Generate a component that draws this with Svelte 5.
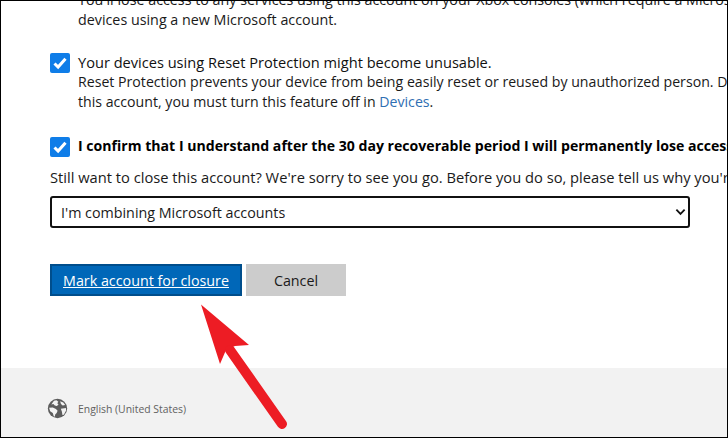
<script>
	let reset = $state(true);
	let confirm = $state(true);
	let reason = $state("combining");
</script>

<div class="frame">
	<main>
		<div class="clip">
			<p class="top">
				You'll lose access to any services using this account on your Xbox consoles (which require a Microsoft account) and any other<br />
				devices using a new Microsoft account.
			</p>
		</div>

		<label class="check first">
			<input type="checkbox" bind:checked={reset} />
			<span class="box"><svg viewBox="0 0 20 20"><path d="M4.500 10.500l3.600 3.600 7.400-8.400" /></svg></span>
			<span class="text">
				<span class="title">Your devices using Reset Protection might become unusable.</span>
				<span>Reset Protection prevents your device from being easily reset or reused by unauthorized person. Due to closing</span>
				<span>this account, you must turn this feature off in <a href="#devices">Devices</a>.</span>
			</span>
		</label>

		<label class="check second">
			<input type="checkbox" bind:checked={confirm} />
			<span class="box"><svg viewBox="0 0 20 20"><path d="M4.500 10.500l3.600 3.600 7.400-8.400" /></svg></span>
			<span class="text">
				<strong>I confirm that I understand after the 30 day recoverable period I will permanently lose access to this account.</strong>
			</span>
		</label>

		<p class="ask">Still want to close this account? We're sorry to see you go. Before you do so, please tell us why you're leaving us.</p>

		<div class="select">
			<select bind:value={reason}>
				<option value="combining">I'm combining Microsoft accounts</option>
			</select>
			<svg viewBox="0 0 12 8"><path d="M1.500 1.500L6 6l4.500-4.500" /></svg>
		</div>

		<div class="actions">
			<button class="primary" type="button">Mark account for closure</button>
			<button class="cancel" type="button">Cancel</button>
		</div>
	</main>

	<footer>
		<svg class="globe" viewBox="0 0 20 20">
			<circle cx="10" cy="10" r="9.200" fill="#5c5c5c" />
			<path fill="#f2f2f2" d="M6.600 2.500 9 2.200l1.800 1.300-1 1.600 1.200 1-1.600 1.600-2-.5-1.300-1.400-2 .3L6.600 2.500zM2 9.200l3.500-.2 3 1.400 1.600 1.800-.9 2.200-1.400 1.300-.3 2h-1l-1-3.400-2.500-1.600L2 9.200zM12.500 3l3 1.200 1.800 2.400-2.400.5-1.600-1.400-.8-2.700zM13.200 10.200l4.800-.6.200 2.400-2.200 4-1.300.2-.5-3.200-1-2.800z" />
		</svg>
		<span>English (United States)</span>
	</footer>

	<svg class="arrow" viewBox="0 0 728 438">
		<path class="head" d="M201 304.500 249 345 235 346 226 350 220 364z" />
		<path class="shaft" d="M230 350 282 424" />
	</svg>
</div>

<style>
	:global(body) {
		margin: 0;
	}
	.frame {
		position: relative;
		box-sizing: border-box;
		width: 728px;
		height: 438px;
		display: flex;
		flex-direction: column;
		overflow: hidden;
		border: 1px solid #000;
		background: #fff;
		color: #1a1a1a;
		font-family: "Open Sans", "Noto Sans", sans-serif;
		font-size: 14.3px;
		line-height: 20px;
	}
	main {
		flex: 1;
		padding-left: 49px;
	}
	.clip {
		height: 29px;
		overflow: hidden;
		position: relative;
	}
	.top {
		margin: -11px 0 0 28px;
		white-space: nowrap;
	}
	.check {
		display: flex;
		gap: 8px;
		white-space: nowrap;
	}
	.check.first {
		margin-top: 22px;
	}
	.check.second {
		margin-top: 24px;
	}
	.check input {
		position: absolute;
		opacity: 0;
		pointer-events: none;
	}
	.box {
		flex: none;
		width: 20px;
		height: 20px;
		margin-top: 1px;
		border-radius: 2px;
		background: #0f7de8;
	}
	.box svg {
		display: block;
		fill: none;
		stroke: #fff;
		stroke-width: 3;
	}
	.text {
		display: flex;
		flex-direction: column;
		font-size: 14.15px;
	}
	.title {
		font-weight: 500;
		font-size: 14.6px;
		color: #111;
	}
	strong {
		font-weight: 700;
		font-size: 14.1px;
		color: #000;
	}
	a {
		color: #2f6fb3;
		text-decoration: none;
	}
	.ask {
		margin: 10px 0 0;
		white-space: nowrap;
		font-size: 14.7px;
	}
	.select {
		position: relative;
		width: 640px;
		margin-top: 9px;
	}
	.select select {
		appearance: none;
		display: block;
		box-sizing: border-box;
		width: 100%;
		height: 32px;
		padding: 2px 9px 0;
		border: 2px solid #111;
		border-radius: 3px;
		background: #fff;
		color: #1a1a1a;
		font: inherit;
	}
	.select svg {
		position: absolute;
		right: 4px;
		top: 12px;
		width: 11px;
		height: 8px;
		fill: none;
		stroke: #111;
		stroke-width: 2;
		pointer-events: none;
	}
	.actions {
		display: flex;
		gap: 4px;
		margin-top: 36px;
	}
	button {
		height: 32px;
		font: inherit;
		padding: 2px 0 0;
		border: 0;
		cursor: pointer;
	}
	.primary {
		box-sizing: border-box;
		width: 192px;
		border: 2px solid #004e8c;
		background: #0067b8;
		color: #fff;
		text-decoration: underline;
	}
	.cancel {
		width: 100px;
		background: #cccccc;
		color: #1a1a1a;
	}
	footer {
		height: 69px;
		flex: none;
		display: flex;
		align-items: center;
		gap: 10px;
		padding: 12px 0 0 46px;
		box-sizing: border-box;
		background: #f2f2f2;
		color: #616161;
		font-size: 10.4px;
	}
	.globe {
		width: 21px;
		height: 21px;
		flex: none;
	}
	.arrow {
		position: absolute;
		left: -1px;
		top: -1px;
		width: 728px;
		height: 438px;
		pointer-events: none;
	}
	.head {
		fill: #ed1c24;
	}
	.shaft {
		stroke: #ed1c24;
		stroke-width: 10;
		stroke-linecap: round;
		fill: none;
	}
</style>
